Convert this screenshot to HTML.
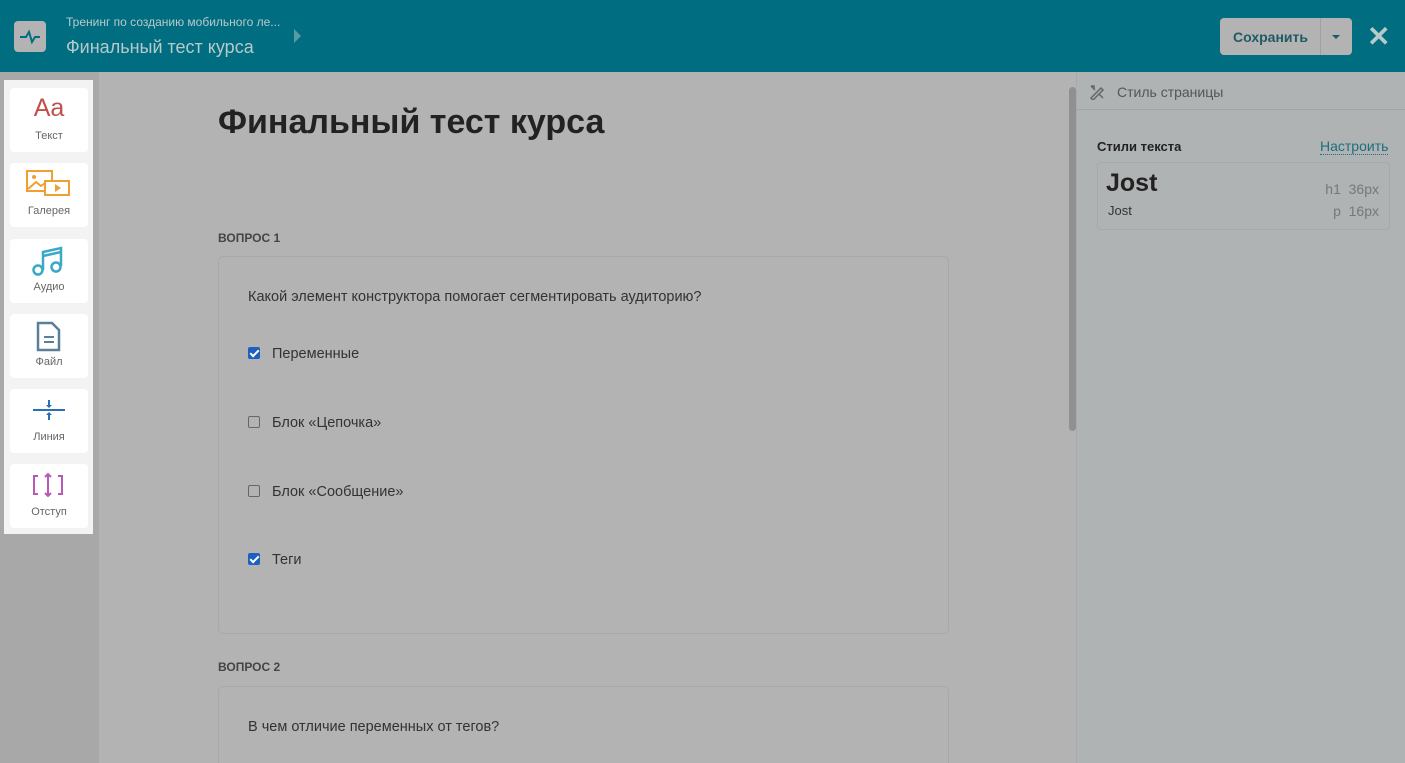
<!DOCTYPE html>
<html style="width:1405px;height:763px;overflow:hidden"><head><meta charset="utf-8"><style>
*{box-sizing:border-box;margin:0;padding:0}
body{width:1405px;height:763px;overflow:hidden;background:#b3b3b3;font-family:"Liberation Sans",sans-serif;position:relative}
.hdr{position:absolute;left:0;top:0;width:1405px;height:72px;background:#006e80}
.logo{position:absolute;left:14px;top:21px;width:32px;height:31px;background:#b3b3b3;border-radius:4px}
.sub{position:absolute;left:66px;top:15px;font-size:12px;color:#b8c9cc}
.ttl{position:absolute;left:66px;top:37px;font-size:18px;color:#b8c9cc}
.save{position:absolute;left:1220px;top:18px;width:132px;height:37px;background:#b3b3b3;border-radius:4px}
.save span{position:absolute;left:13px;top:11px;font-size:14px;font-weight:bold;color:#1f5a63}
.save i{position:absolute;left:100px;top:0;width:1px;height:37px;background:#a0a0a0}
.save b{position:absolute;left:112px;top:17px;border:4px solid transparent;border-top:4px solid #1f5a63}
.x{position:absolute;left:1367px;top:20px;font-size:28px;color:#b8c9cc;font-weight:bold}
.gut{position:absolute;left:0;top:72px;width:99px;height:691px;background:#a8a8a8}
.side{position:absolute;left:4px;top:80px;width:89px;height:454px;background:#f3f3f3}
.card{position:absolute;left:10px;width:78px;height:64px;background:#fff;border-radius:4px;text-align:center;font-size:11px;color:#666}
.card .l{position:absolute;left:0;right:0;top:42px}
.card svg{position:absolute;left:22px;top:7px}
.rp{position:absolute;left:1076px;top:72px;width:329px;height:691px;background:#b0b3b3;border-left:1px solid #a8abab}
.rph{height:38px;border-bottom:1px solid #a0a6a6;font-size:14px;color:#555;padding:12px 0 0 40px}
.sb{position:absolute;left:1069px;top:87px;width:7px;height:344px;background:#909090;border-radius:4px}
h1{position:absolute;left:218px;top:103px;font-size:34px;color:#222;font-weight:bold}
.q{position:absolute;left:218px;font-size:12px;font-weight:bold;color:#444}
.box{position:absolute;left:218px;width:731px;border:1px solid #a4aaaa;border-radius:5px}
.t{position:absolute;font-size:14.5px;color:#333}
.cb{position:absolute;left:248px;width:12px;height:12px;border:1px solid #666;border-radius:2px;background:#b3b3b3}
.cb.on{background:#1f5fbf;border-color:#1f5fbf}
.cb.on:after{content:"";position:absolute;left:3px;top:0px;width:3px;height:7px;border:solid #fff;border-width:0 2px 2px 0;transform:rotate(45deg)}
</style></head><body>
<div class="hdr">
<div class="logo"><svg width="32" height="31"><path d="M6 16h6l3-5 3 10 3-5h5" stroke="#006e80" stroke-width="2" fill="none"/></svg></div>
<div class="sub">Тренинг по созданию мобильного ле...</div>
<div class="ttl">Финальный тест курса</div>
<svg style="position:absolute;left:294px;top:29px" width="8" height="14"><path d="M0 0l7 7-7 7z" fill="#5a9aa6"/></svg>
<div class="save"><span>Сохранить</span><i></i><b></b></div>
<div class="x">✕</div>
</div>
<div class="gut"></div>
<div class="side"></div>
<div class="card" style="top:88px"><div style="position:absolute;left:0;right:0;top:6px;font-size:25px;color:#c0504d">Aa</div><div class="l">Текст</div></div>
<div class="card" style="top:163px"><svg width="46" height="32" style="left:16px;top:6px"><rect x="1" y="2" width="25" height="20" fill="none" stroke="#f0a030" stroke-width="2"/><path d="M2 20l8-7 5 4 4-3 7 6" stroke="#f0a030" stroke-width="2" fill="none"/><circle cx="8" cy="8" r="2" fill="#f0a030"/><rect x="19" y="12" width="24" height="14" fill="#fff" stroke="#f0a030" stroke-width="2"/><path d="M29 15l6 4-6 4z" fill="#f0a030"/></svg><div class="l">Галерея</div></div>
<div class="card" style="top:239px"><svg width="34" height="32"><path d="M11 24V6l18-4v18" stroke="#3aa8c8" stroke-width="2.5" fill="none"/><circle cx="6" cy="24" r="4.5" fill="none" stroke="#3aa8c8" stroke-width="2.5"/><circle cx="24" cy="21" r="4.5" fill="none" stroke="#3aa8c8" stroke-width="2.5"/><path d="M11 10l18-4" stroke="#3aa8c8" stroke-width="2.5"/></svg><div class="l">Аудио</div></div>
<div class="card" style="top:314px"><svg width="34" height="32"><path d="M6 2h14l7 7v20H6z" fill="none" stroke="#5a7f99" stroke-width="2.5"/><path d="M12 16h10M12 21h10" stroke="#5a7f99" stroke-width="2"/></svg><div class="l">Файл</div></div>
<div class="card" style="top:389px"><svg width="34" height="32"><path d="M1 14h32" stroke="#2a6fb5" stroke-width="2"/><path d="M17 4v7M17 17v7" stroke="#2a6fb5" stroke-width="2"/><path d="M14 9l3 3 3-3zM14 19l3-3 3 3z" fill="#2a6fb5"/></svg><div class="l">Линия</div></div>
<div class="card" style="top:464px"><svg width="34" height="32"><path d="M6 5H2v18h4M26 5h4v18h-4" stroke="#b55ab5" stroke-width="2" fill="none"/><path d="M16 3v22M13 6l3-3 3 3M13 22l3 3 3-3" stroke="#b55ab5" stroke-width="2" fill="none"/></svg><div class="l">Отступ</div></div>
<div class="sb"></div>
<h1>Финальный тест курса</h1>
<div class="q" style="top:231px">ВОПРОС 1</div>
<div class="box" style="top:256px;height:378px"></div>
<div class="t" style="left:248px;top:289px">Какой элемент конструктора помогает сегментировать аудиторию?</div>
<div class="cb on" style="top:347px"></div><div class="t" style="left:272px;top:346px">Переменные</div>
<div class="cb" style="top:416px"></div><div class="t" style="left:272px;top:415px">Блок «Цепочка»</div>
<div class="cb" style="top:485px"></div><div class="t" style="left:272px;top:484px">Блок «Сообщение»</div>
<div class="cb on" style="top:553px"></div><div class="t" style="left:272px;top:552px">Теги</div>
<div class="q" style="top:660px">ВОПРОС 2</div>
<div class="box" style="top:686px;height:77px;border-bottom:none;border-radius:5px 5px 0 0"></div>
<div class="t" style="left:248px;top:719px">В чем отличие переменных от тегов?</div>
<div class="rp"><div class="rph">Стиль страницы</div>
<svg style="position:absolute;left:12px;top:12px" width="16" height="16"><path d="M2 14L12 4l2 2L4 16zM2 2l4 4M10 10l4 4M2 2h3v3" stroke="#666" stroke-width="1.5" fill="none"/></svg>
<div style="position:absolute;left:20px;top:67px;font-size:13px;font-weight:bold;color:#222">Стили текста</div>
<div style="position:absolute;left:243px;top:66px;font-size:14px;color:#1c6f80;border-bottom:1px dotted #1c6f80">Настроить</div>
<div style="position:absolute;left:20px;top:90px;width:293px;height:68px;border:1px solid #a4aaaa;border-radius:4px">
<div style="position:absolute;left:8px;top:6px;font-size:25px;font-weight:bold;color:#222">Jost</div>
<div style="position:absolute;left:10px;top:40px;font-size:13px;color:#333">Jost</div>
<div style="position:absolute;right:10px;top:18px;font-size:14px;color:#777">h1&nbsp;&nbsp;36px</div>
<div style="position:absolute;right:10px;top:40px;font-size:14px;color:#777">p&nbsp;&nbsp;16px</div>
</div></div>
</body></html>
